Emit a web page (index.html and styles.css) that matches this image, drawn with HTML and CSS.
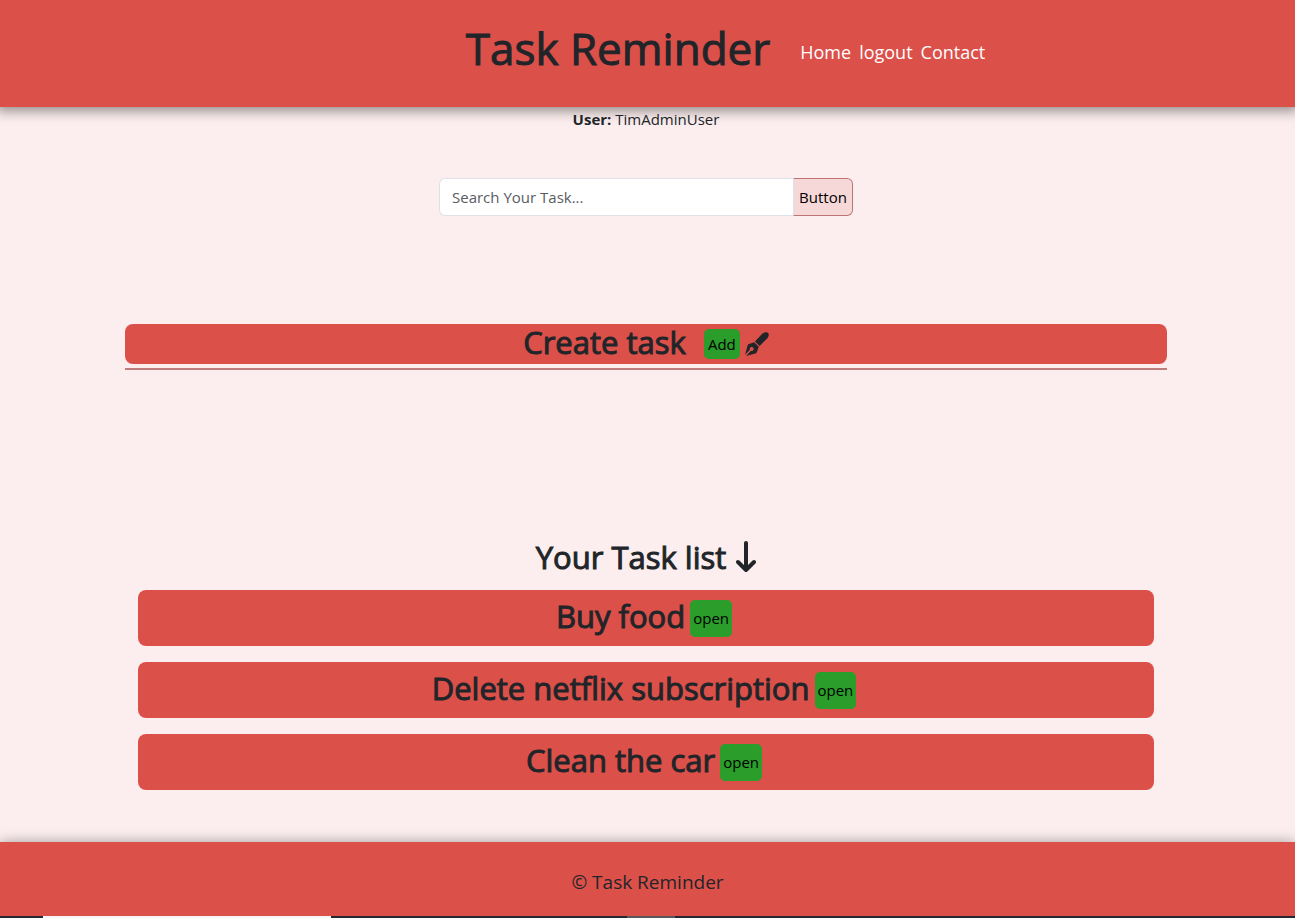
FILE: index.html
```html
<!DOCTYPE html>
<html lang="en">
<head>
<meta charset="utf-8">
<title>Task Reminder</title>
<link rel="stylesheet" href="styles.css">
</head>
<body>
<header class="site-header">
  <h1 class="site-title">Task Reminder</h1>
  <nav class="site-nav">
    <a href="#">Home</a>
    <a href="#">logout</a>
    <a href="#">Contact</a>
  </nav>
</header>
<main class="content">
  <p class="user"><strong>User:</strong> TimAdminUser</p>
  <form class="search">
    <input class="search-input" type="text" placeholder="Search Your Task..." aria-label="Search Your Task">
    <button class="search-button" type="button">Button</button>
  </form>
  <section class="create">
    <div class="create-bar">
      <h2 class="heading create-title">Create task</h2>
      <button class="green-button add" type="button">Add</button>
      <svg class="pen" viewBox="0 0 24 24" aria-hidden="true">
        <path fill="currentColor" d="M17.200 1.700C19.100.2 21.700-.4 23 .8c1.300 1.200.9 3.800-.8 5.600L14.600 13.900 10 9.400zM9.200 10.200l4.600 4.500-1.900 5.300c-.3.8-.8 1.200-1.600 1.500L1.200 23.900l4.700-5.100a2 2 0 1 0-1-1L.1 22.700l2.400-9c.2-.8.8-1.400 1.500-1.600z"/>
      </svg>
    </div>
    <hr class="rule">
  </section>
  <section class="tasks">
    <h2 class="heading list-title">Your Task list
      <svg class="arrow" viewBox="0 0 20 32" aria-hidden="true">
        <path d="M10 2v27M2 21l8 8 8-8" fill="none" stroke="currentColor" stroke-width="4" stroke-linecap="round" stroke-linejoin="round"/>
      </svg>
    </h2>
    <ul class="task-list">
      <li class="task"><h2 class="heading">Buy food</h2><button class="green-button" type="button">open</button></li>
      <li class="task"><h2 class="heading">Delete netflix subscription</h2><button class="green-button" type="button">open</button></li>
      <li class="task"><h2 class="heading">Clean the car</h2><button class="green-button" type="button">open</button></li>
    </ul>
  </section>
</main>
<footer class="site-footer">© Task Reminder</footer>
<div class="strip"><span class="strip-light"></span><span class="strip-grey"></span></div>
</body>
</html>
```
FILE: styles.css
```css
* { box-sizing: border-box; }
body {
  margin: 0;
  min-height: 100vh;
  display: flex;
  flex-direction: column;
  background: #fceeee;
  color: #212529;
  font: 15px/24px "Open Sans", "Noto Sans", sans-serif;
}
h1, h2, p, ul { margin: 0; padding: 0; }
button, input { font: inherit; }
.site-header {
  display: flex;
  justify-content: center;
  align-items: center;
  gap: 30px;
  padding: 18px 0 29px 156px;
  background: #dc504a;
  box-shadow: 0 0 12px 4px rgba(0, 0, 0, .42);
}
.site-title {
  font-size: 44px;
  line-height: 60px;
  font-weight: 500;
  -webkit-text-stroke: 1px currentColor;
}
.site-nav { display: flex; gap: 8px; padding-top: 8px; font-size: 18px; }
.site-nav a { color: #fff; text-decoration: none; }
.content {
  flex: 1;
  display: flex;
  flex-direction: column;
  padding: 0 128px 51px 125px;
}
.user { text-align: center; }
.search {
  display: flex;
  width: 414px;
  height: 38px;
  margin: 47px auto 108px;
}
.search-input {
  flex: 1;
  min-width: 0;
  padding: 0 12px;
  border: 1px solid #dee2e6;
  border-right: 0;
  border-radius: 6px 0 0 6px;
  background: #fff;
}
.search-input::placeholder { color: #595c5f; opacity: 1; }
.search-button {
  width: 60px;
  padding: 0;
  border: 1px solid #bf7474;
  border-left-color: #dee2e6;
  border-radius: 0 6px 6px 0;
  background: #f7d8d8;
  color: #000;
}
.heading {
  font-size: 31px;
  line-height: 38px;
  font-weight: 500;
  -webkit-text-stroke: 1px currentColor;
}
.create-bar {
  display: flex;
  justify-content: center;
  align-items: center;
  height: 40px;
  border-radius: 8px;
  background: #dc504a;
}
.create-title { padding-bottom: 4px; }
.green-button {
  height: 37px;
  padding: 0 3px;
  border: 0;
  border-radius: 5px;
  background: #2a9d2a;
  color: #000;
}
.add { width: 36px; height: 30px; margin: 0 5px 0 18px; }
.pen { width: 24px; height: 24px; }
.rule { margin: 4px 0 0; border: 0; height: 2px; background: #c07b7b; }
.tasks { padding: 168px 13px 0; }
.list-title {
  display: flex;
  justify-content: center;
  align-items: center;
  gap: 10px;
}
.arrow { width: 20px; height: 32px; }
.task-list { display: grid; gap: 16px; margin-top: 14px; list-style: none; }
.task {
  display: flex;
  justify-content: center;
  align-items: center;
  gap: 5px;
  min-height: 56px;
  padding-right: 4px;
  border-radius: 8px;
  background: #dc504a;
}
.task .heading { padding-bottom: 5px; }
.site-footer {
  padding: 25px 0 19px;
  background: #dc504a;
  box-shadow: 0 0 12px rgba(0, 0, 0, .35);
  text-align: center;
  font-size: 19px;
  line-height: 30px;
}
.strip {
  display: flex;
  gap: 296px;
  height: 2px;
  padding-left: 43px;
  background: #252830;
}
.strip-light { width: 288px; background: #f5f5f5; }
.strip-grey { width: 48px; background: #5a5858; }
```
